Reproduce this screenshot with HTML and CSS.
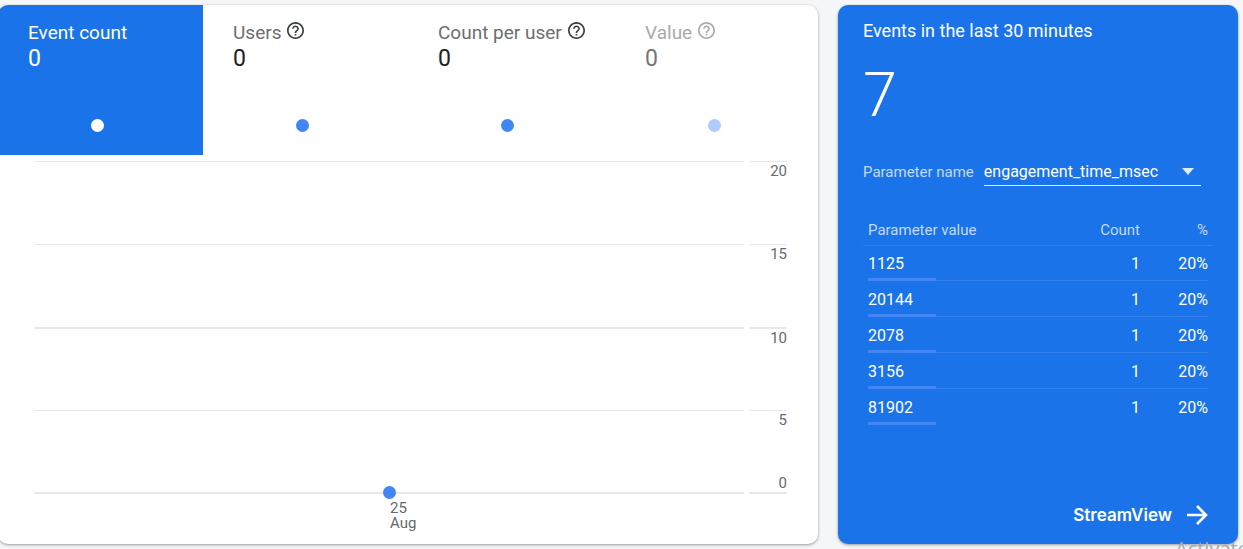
FILE: index.html
```html
<!DOCTYPE html>
<html lang="en">
<head>
<meta charset="utf-8">
<title>Event report</title>
<link rel="stylesheet" href="styles.css">
</head>
<body>
<svg class="defs" width="0" height="0" aria-hidden="true">
  <symbol id="help" viewBox="2 2 20 20">
    <path fill="currentColor" d="M11 18h2v-2h-2v2zm1-16C6.480 2 2 6.480 2 12s4.480 10 10 10 10-4.480 10-10S17.520 2 12 2zm0 18c-4.410 0-8-3.590-8-8s3.590-8 8-8 8 3.590 8 8-3.590 8-8 8zm0-14c-2.210 0-4 1.790-4 4h2c0-1.100.9-2 2-2s2 .9 2 2c0 2-3 1.750-3 5h2c0-2.250 3-2.500 3-5 0-2.210-1.790-4-4-4z"/>
  </symbol>
</svg>
<main class="page">
  <section class="card report">
    <div class="tabs" role="tablist">
      <button class="tab selected" role="tab" aria-selected="true">
        <span class="tab-title">Event count</span>
        <span class="tab-value">0</span>
        <span class="spark"><span class="dot"></span></span>
      </button>
      <button class="tab" role="tab">
        <span class="tab-title">Users <svg class="help"><use href="#help"/></svg></span>
        <span class="tab-value">0</span>
        <span class="spark"><span class="dot"></span></span>
      </button>
      <button class="tab" role="tab">
        <span class="tab-title">Count per user <svg class="help"><use href="#help"/></svg></span>
        <span class="tab-value">0</span>
        <span class="spark"><span class="dot"></span></span>
      </button>
      <button class="tab muted" role="tab">
        <span class="tab-title">Value <svg class="help"><use href="#help"/></svg></span>
        <span class="tab-value">0</span>
        <span class="spark"><span class="dot"></span></span>
      </button>
    </div>
    <div class="chart">
      <div class="band"><div class="plot"></div><div class="axis"><span>20</span></div></div>
      <div class="band"><div class="plot"></div><div class="axis"><span>15</span></div></div>
      <div class="band strong"><div class="plot"></div><div class="axis"><span>10</span></div></div>
      <div class="band last"><div class="plot"></div><div class="axis"><span>5</span><span>0</span></div></div>
      <div class="band base strong">
        <div class="plot"><span class="dot point"></span><div class="date">25<br>Aug</div></div>
        <div class="axis"></div>
      </div>
    </div>
  </section>

  <section class="card realtime">
    <h2 class="title">Events in the last 30 minutes</h2>
    <div class="total">7</div>
    <div class="param">
      <label for="param">Parameter name</label>
      <div class="picker">
        <select id="param"><option>engagement_time_msec</option></select>
        <svg class="caret" viewBox="0 0 12 7"><path fill="currentColor" d="M0 0h12L6 7z"/></svg>
      </div>
    </div>
    <table class="values">
      <thead><tr><th class="name">Parameter value</th><th>Count</th><th class="share">%</th></tr></thead>
      <tbody>
        <tr><td class="name">1125</td><td>1</td><td>20%</td></tr>
        <tr><td class="name">20144</td><td>1</td><td>20%</td></tr>
        <tr><td class="name">2078</td><td>1</td><td>20%</td></tr>
        <tr><td class="name">3156</td><td>1</td><td>20%</td></tr>
        <tr><td class="name">81902</td><td>1</td><td>20%</td></tr>
      </tbody>
    </table>
    <a class="stream" href="#">StreamView
      <svg class="arrow" viewBox="0 0 22 22"><path fill="none" stroke="currentColor" stroke-width="2.600" d="M1 11h19M11 2l9 9-9 9"/></svg>
    </a>
  </section>
</main>
<div class="watermark">Activate Windows</div>
</body>
</html>
```
FILE: styles.css
```css
* { box-sizing: border-box; }
body {
  margin: 0;
  min-height: 100vh;
  display: flex;
  position: relative;
  overflow: hidden;
  background: #f5f6f8;
  font-family: Roboto, "Liberation Sans", sans-serif;
}
.defs { position: absolute; }
.page {
  flex: 1;
  display: flex;
  gap: 20px;
  padding: 5px 5px 5px 0;
  margin-left: -2px;
}
.card {
  border-radius: 10px;
  box-shadow: 0 1px 3px rgba(60, 64, 67, .5);
}
.report {
  flex: 1;
  min-width: 0;
  background: #fff;
}
.tabs {
  display: grid;
  grid-template-columns: 205fr 205fr 207fr 203fr;
}
.tab {
  display: flex;
  flex-direction: column;
  height: 150px;
  padding: 16px 0 0 30px;
  border: 0;
  background: none;
  font: inherit;
  text-align: left;
  color: #202124;
}
.tab-title {
  display: flex;
  align-items: center;
  gap: 6px;
  font-size: 19px;
  line-height: 24px;
  color: #6d6e70;
  white-space: nowrap;
}
.tab-value {
  font-size: 23px;
  line-height: 27px;
}
.help {
  width: 17px;
  height: 17px;
  margin-bottom: 6px;
  color: #3c4043;
}
.spark {
  display: flex;
  justify-content: center;
  width: 139px;
  margin-top: 47px;
}
.dot {
  width: 13px;
  height: 13px;
  border-radius: 50%;
  background: #4285f4;
}
.selected {
  background: #1a73e8;
  border-top-left-radius: 10px;
  color: #fff;
}
.selected .tab-title { color: #fff; }
.selected .dot { background: #fff; }
.muted .tab-title, .muted .help { color: #a9aaab; }
.muted .tab-value { color: #757677; }
.muted .dot { background: #b1ccfa; }

.chart {
  padding: 6px 31px 0 36px;
  font-size: 15px;
  color: #66696d;
}
.band {
  display: flex;
  gap: 5px;
  height: 83px;
}
.plot, .axis { border-top: 1px solid #e8e8e8; }
.strong > .plot, .strong > .axis { border-top-width: 2px; }
.plot { flex: 1; position: relative; }
.axis {
  width: 38px;
  display: flex;
  flex-direction: column;
  justify-content: space-between;
  align-items: flex-end;
  line-height: 18px;
}
.last { height: 82px; }
.base { height: 38px; }
.point {
  position: absolute;
  left: calc(50% - 6px);
  top: -8px;
}
.date {
  margin: 7px 0 0 50%;
  padding-left: 1px;
  height: 30px;
  line-height: 15px;
  overflow: hidden;
}

.realtime {
  width: 400px;
  display: flex;
  flex-direction: column;
  padding: 14px 25px 15px;
  background: #1a73e8;
  color: #fff;
}
.title {
  margin: 0;
  font-size: 18px;
  line-height: 24px;
  font-weight: 400;
}
.total {
  margin-top: 17px;
  font-size: 61px;
  line-height: 70px;
  font-weight: 300;
}
.param {
  display: flex;
  align-items: center;
  gap: 10px;
  margin-top: 27px;
  font-size: 15px;
  color: #c2daf9;
}
.picker {
  position: relative;
  width: 217px;
}
.picker select {
  appearance: none;
  width: 100%;
  height: 29px;
  padding: 1px 0 0;
  border: 0;
  border-bottom: 1px solid #e3edfc;
  background: none;
  font: 16px Roboto, sans-serif;
  color: #fff;
}
.caret {
  position: absolute;
  right: 7px;
  top: 11px;
  width: 12px;
  height: 7px;
  color: #dfebfc;
}
.values {
  width: 100%;
  margin-top: 30px;
  border-collapse: collapse;
  font-size: 16px;
  text-align: right;
}
.values th {
  height: 29px;
  padding: 0 5px;
  border-bottom: 1px solid #3080eb;
  font-size: 15px;
  font-weight: 400;
  color: #c2daf9;
}
.values .name { text-align: left; }
.values .share { width: 68px; }
.values td { height: 36px; padding: 0 5px; }
.values tbody tr {
  background:
    linear-gradient(#4285f4, #4285f4) 5px 100% / calc((100% - 10px) * .2) 3px no-repeat,
    linear-gradient(#3080eb, #3080eb) center bottom / calc(100% - 10px) 1px no-repeat;
}
.values tbody tr:last-child {
  background: linear-gradient(#4285f4, #4285f4) 5px 100% / calc((100% - 10px) * .2) 3px no-repeat;
}
.stream {
  display: flex;
  align-items: center;
  gap: 14px;
  align-self: flex-end;
  margin-top: auto;
  margin-right: 5px;
  font: 600 17px/28px Inter, sans-serif;
  color: #fff;
  text-decoration: none;
}
.arrow { width: 22px; height: 22px; }
.watermark {
  position: absolute;
  right: 0;
  bottom: 0;
  width: 68px;
  height: 10px;
  overflow: hidden;
  font: 20px/20px "Open Sans", sans-serif;
  color: #a8a9ab;
  white-space: nowrap;
}
```
